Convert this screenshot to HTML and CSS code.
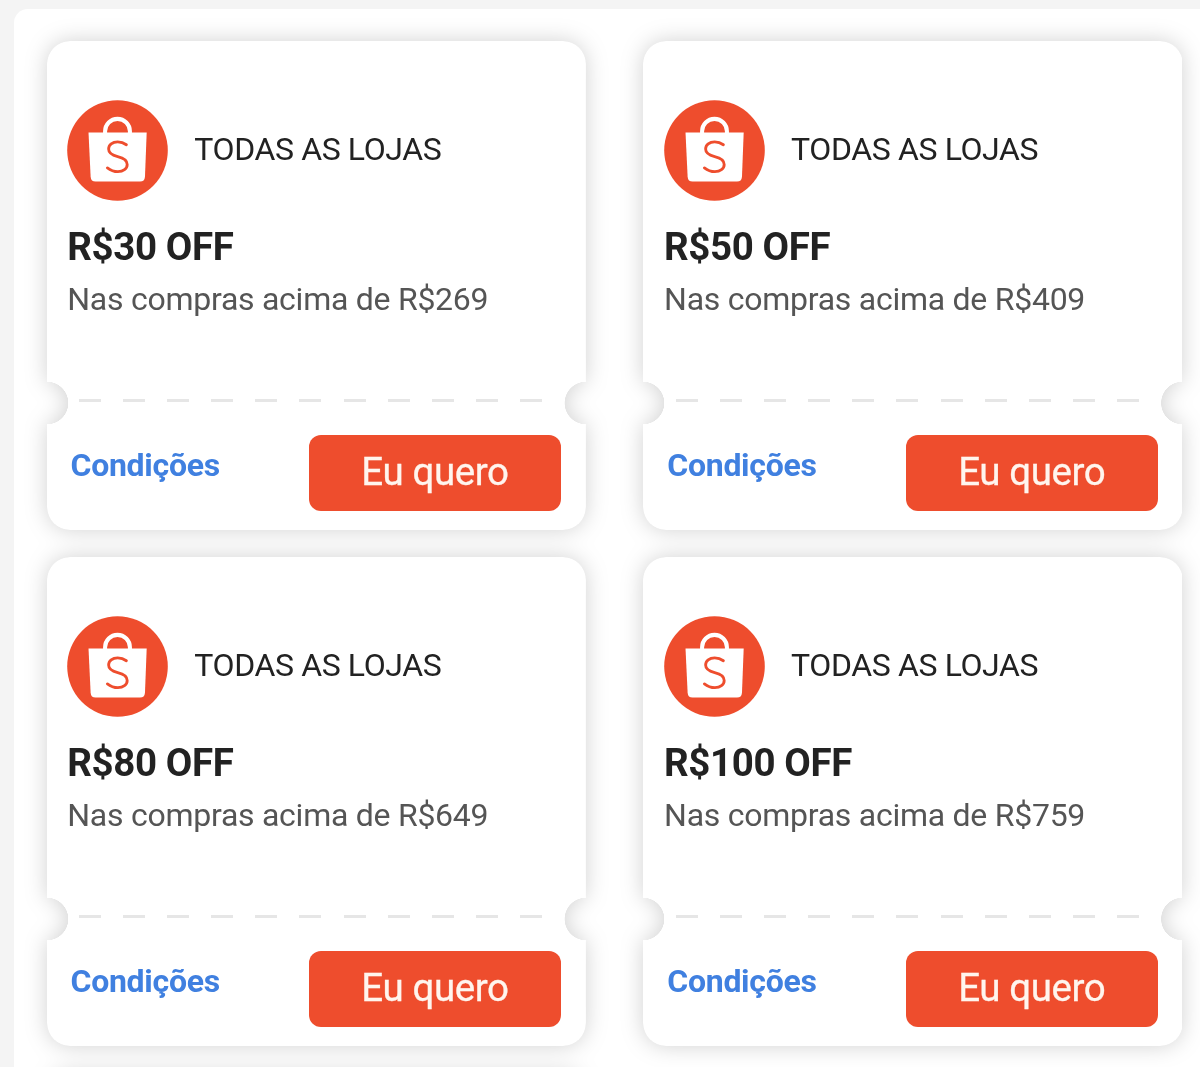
FILE: index.html
```html
<!DOCTYPE html>
<html lang="pt-BR">
<head>
    <meta charset="UTF-8">
    <meta name="viewport" content="width=device-width, initial-scale=1.0">
    <title>Cupons</title>
    <link rel="stylesheet" href="styles.css">
</head>
<body>
    <svg width="0" height="0" class="sprite">
        <symbol id="logo" viewBox="0 0 100 100">
            <circle cx="50" cy="50" r="49.8" fill="#ee4d2d"/>
            <path d="M37.7 34 V31 A12.3 12.3 0 0 1 62.3 31 V34" fill="none" stroke="#fff" stroke-width="4"/>
            <path d="M21.3 32.3 H78.9 L77.2 76 Q76.9 80.8 72.3 80.8 H28.3 Q23.7 80.8 23.4 76 Z" fill="#fff"/>
            <path d="M58.8 44.3 C56 42.3 53.2 41.5 50.2 41.5 C45 41.5 41.2 44.4 41.2 48.6 C41.2 53 44.6 54.7 50.2 56 C56.2 57.4 59.6 59.4 59.6 63.8 C59.6 68.2 55.6 71 50.4 71 C46.4 71 43 69.6 40 67.2" fill="none" stroke="#ee4d2d" stroke-width="2.8" stroke-linecap="round"/>
        </symbol>
    </svg>
    <div class="panel">
        <div class="cupons">
            <div class="cupom">
                <div class="loja">
                    <svg class="logo"><use href="#logo"/></svg>
                    <span>TODAS AS LOJAS</span>
                </div>
                <h2>R$30 OFF</h2>
                <p>Nas compras acima de R$269</p>
                <div class="linha"></div>
                <div class="acoes">
                    <a class="condicoes">Condições</a>
                    <button class="quero">Eu quero</button>
                </div>
            </div>
            <div class="cupom">
                <div class="loja">
                    <svg class="logo"><use href="#logo"/></svg>
                    <span>TODAS AS LOJAS</span>
                </div>
                <h2>R$50 OFF</h2>
                <p>Nas compras acima de R$409</p>
                <div class="linha"></div>
                <div class="acoes">
                    <a class="condicoes">Condições</a>
                    <button class="quero">Eu quero</button>
                </div>
            </div>
            <div class="cupom">
                <div class="loja">
                    <svg class="logo"><use href="#logo"/></svg>
                    <span>TODAS AS LOJAS</span>
                </div>
                <h2>R$80 OFF</h2>
                <p>Nas compras acima de R$649</p>
                <div class="linha"></div>
                <div class="acoes">
                    <a class="condicoes">Condições</a>
                    <button class="quero">Eu quero</button>
                </div>
            </div>
            <div class="cupom">
                <div class="loja">
                    <svg class="logo"><use href="#logo"/></svg>
                    <span>TODAS AS LOJAS</span>
                </div>
                <h2>R$100 OFF</h2>
                <p>Nas compras acima de R$759</p>
                <div class="linha"></div>
                <div class="acoes">
                    <a class="condicoes">Condições</a>
                    <button class="quero">Eu quero</button>
                </div>
            </div>
            <div class="cupom"></div>
        </div>
    </div>
</body>
</html>
```

FILE: styles.css
```css
* {
    box-sizing: border-box;
}
body {
    margin: 0;
    padding: 9px 0 0 13.5px;
    height: 100vh;
    overflow: hidden;
    background-color: #f4f4f4;
    font-family: Roboto, sans-serif;
    color: #222;
}
.sprite {
    display: block;
}
.panel {
    width: 1230px;
    height: 1058px;
    padding: 32.3px 33px 0;
    border-radius: 14px 0 0 0;
    background-color: white;
    overflow: hidden;
}
.cupons {
    display: grid;
    grid-template-columns: 539.5px 539.5px;
    grid-auto-rows: 489px;
    gap: 27px 57.3px;
    filter: drop-shadow(0 0 11px rgba(0, 0, 0, 0.18));
}
.cupom {
    display: flex;
    flex-direction: column;
    padding: 58.3px 25px 19px 20.8px;
    border-radius: 23px;
    background-color: white;
    /* side notches */
    -webkit-mask: radial-gradient(circle at 0 362px, transparent 21px, black 21.5px) left / 51% 100% no-repeat,
        radial-gradient(circle at 100% 362px, transparent 21px, black 21.5px) right / 51% 100% no-repeat;
    mask: radial-gradient(circle at 0 362px, transparent 21px, black 21.5px) left / 51% 100% no-repeat,
        radial-gradient(circle at 100% 362px, transparent 21px, black 21.5px) right / 51% 100% no-repeat;
}
.loja {
    display: flex;
    align-items: center;
    gap: 26px;
    font-size: 32px;
    letter-spacing: -0.38px;
}
.loja span {
    padding-bottom: 3px;
}
.logo {
    width: 101px;
    height: 101px;
    overflow: visible;
}
.cupom h2 {
    margin: 23.3px 0 0;
    font-size: 38.5px;
    line-height: 46px;
    letter-spacing: -0.4px;
}
.cupom p {
    margin: 9.4px 0 0;
    font-size: 32px;
    line-height: 40px;
    letter-spacing: -0.26px;
    color: #555;
}
.linha {
    height: 3px;
    width: 464px;
    margin: 79.5px 0 0 11.7px;
    background: repeating-linear-gradient(to right, #e6e6e6 0 22px, transparent 22px 44.1px);
}
.acoes {
    display: flex;
    justify-content: space-between;
    margin-top: 33.5px;
}
.condicoes {
    margin: 11px 0 0 3.2px;
    font-size: 32px;
    line-height: 38px;
    font-weight: bold;
    letter-spacing: -0.28px;
    color: #4080e0;
}
.quero {
    width: 252px;
    height: 75.4px;
    padding: 0 0 2px;
    border: none;
    border-radius: 12px;
    background-color: #ee4d2d;
    color: #fff5ee;
    font-family: inherit;
    font-size: 38.5px;
    letter-spacing: -0.4px;
    -webkit-text-stroke: 0.3px #fff5ee;
    cursor: pointer;
}
```
